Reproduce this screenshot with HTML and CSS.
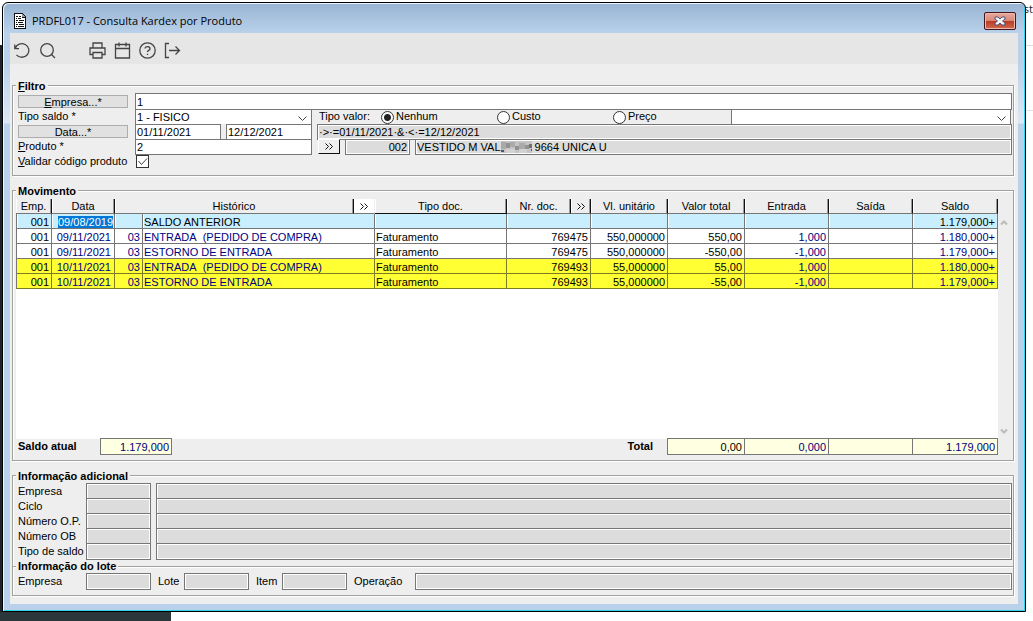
FILE: index.html
```html
<!DOCTYPE html>
<html lang="pt-BR">
<head>
<meta charset="utf-8">
<title>PRDFL017 - Consulta Kardex por Produto</title>
<link rel="stylesheet" href="styles.css">
</head>
<body>
<div class="behind" aria-hidden="true">st</div>
<main class="window">
  <header class="titlebar">
    <svg class="app-icon" width="12" height="16" viewBox="0 0 12 16" shape-rendering="crispEdges"><path d="M0 0h8l4 4v12H0z" fill="#111"/><path d="M1 1h7v4h3v10H1z" fill="#fff"/><path d="M8 1l3 3H8z" fill="#999"/><path d="M2 3h2v1H2zM5 3h2v1H5zM2 5h1v1H2zM4 5h3v1H4zM2 7h2v1H2zM5 7h5v1H5zM2 9h1v1H2zM4 9h5v1H4zM2 11h2v1H2zM5 11h5v1H5zM2 13h1v1H2zM4 13h6v1H4z" fill="#111"/></svg>
    <h1 class="title">PRDFL017 - Consulta Kardex por Produto</h1>
    <button class="close" type="button" aria-label="Fechar"><svg width="12" height="10" viewBox="0 0 12 10"><path d="M1 1h3l2 2 2-2h3v2L8.500 5 11 7v2H8L6 7 4 9H1V7l2.500-2L1 3z" fill="#f4f4f8" stroke="#4d5470" stroke-width="1"/></svg></button>
  </header>
  <nav class="toolbar" aria-label="Ferramentas">
    <button type="button" class="tool" aria-label="Desfazer"><svg viewBox="0 0 17 17"><path d="M.8 2.500v4.200h4.200M1.200 6.500A7 6.800 0 1 1 2.500 12.800"/></svg></button>
    <button type="button" class="tool" aria-label="Pesquisar"><svg viewBox="0 0 17 17"><circle cx="8" cy="8" r="6.300"/><path d="M12.500 12.500l3.500 3.500"/></svg></button>
    <button type="button" class="tool tool-gap" aria-label="Imprimir"><svg viewBox="0 0 17 17"><path d="M4 6V1h9v5M4 12.500H1V6h15v6.500h-3M4 10.500h9V16H4z"/></svg></button>
    <button type="button" class="tool" aria-label="Calendário"><svg viewBox="0 0 17 17"><path d="M1.500 2.500h14v13.500h-14zM1.500 6.500h14M5 .5v4M12 .5v4"/></svg></button>
    <button type="button" class="tool" aria-label="Ajuda"><svg viewBox="0 0 17 17"><circle cx="8.500" cy="8.500" r="7.700"/><path d="M6 6.500c.3-2.700 5-2.500 5 .2 0 1.700-2.500 1.700-2.500 3.300M8.500 11.800v1.300"/></svg></button>
    <button type="button" class="tool" aria-label="Sair"><svg viewBox="0 0 17 17"><path d="M5 1.500H1.500v14H5M5 8.500h10.500M11.500 4.500l4 4-4 4"/></svg></button>
  </nav>

  <form class="content">
    <fieldset class="group">
      <legend><u>F</u>iltro</legend>
      <div class="row">
        <div class="label"><button type="button" class="label-btn" id="l-emp"><u>E</u>mpresa...*</button></div>
        <input class="field tall grow" type="text" value="1" aria-labelledby="l-emp">
      </div>
      <div class="row">
        <label class="label" for="tipo">Tipo saldo *</label>
        <span class="combo w-main"><select id="tipo"><option>1 - FISICO</option></select><svg class="chev" viewBox="0 0 9 6"><path d="M.5 .5l4 4 4-4"/></svg></span>
        <span class="caption">Tipo valor:</span>
        <label class="radio"><input type="radio" name="valor" checked>Nenhum</label>
        <label class="radio"><input type="radio" name="valor">Custo</label>
        <label class="radio"><input type="radio" name="valor">Preço</label>
        <span class="combo grow price"><select aria-label="Tabela de preço"><option></option></select><svg class="chev" viewBox="0 0 9 6"><path d="M.5 .5l4 4 4-4"/></svg></span>
      </div>
      <div class="row">
        <div class="label"><button type="button" class="label-btn" id="l-data">Data...*</button></div>
        <span class="dates w-main"><input class="field date" type="text" value="01/11/2021" aria-labelledby="l-data"><input class="field date" type="text" value="12/12/2021" aria-label="Data final"></span>
        <input class="field ro grow gap" type="text" readonly value="·&gt;·=01/11/2021·&amp;·&lt;·=12/12/2021" aria-label="Expressão">
      </div>
      <div class="row">
        <label class="label" for="prod"><u>P</u>roduto *</label>
        <input class="field w-main" id="prod" type="text" value="2">
        <button type="button" class="more" aria-label="Mais produtos"><svg viewBox="0 0 8 7"><path d="M.5 .5l3 3-3 3M4.500 .5l3 3-3 3"/></svg></button>
        <input class="field ro code" type="text" readonly value="002" aria-label="Código">
        <output class="field ro desc grow gap"><span>VESTIDO M VAL</span><svg class="mosaic" viewBox="0 0 34 13" preserveAspectRatio="none" shape-rendering="crispEdges"><path d="M0 0h34v13H0z" fill="#c4c4c4"/><path d="M0 1h5v8H0zM10 1h5v5h-5zM20 2h6v7h-6z" fill="#aaa"/><path d="M5 2h5v6H5zM15 5h5v5h-5zM26 4h5v5h-5z" fill="#929292"/><path d="M31 3h3v5h-3z" fill="#707070"/><path d="M0 10h3v2H0zM33 9h1v2h-1z" fill="#555"/><path d="M5 9h10v4H5zM20 9h8v4h-8z" fill="#d2d2d2"/></svg><span>9664 UNICA U</span></output>
      </div>
      <div class="row">
        <label class="label" for="valida"><u>V</u>alidar código produto</label>
        <span class="check"><input type="checkbox" id="valida" checked><svg viewBox="0 0 13 13"><path d="M2.500 6l3 3.500 5.500-6"/></svg></span>
      </div>
    </fieldset>

    <fieldset class="group movement">
      <legend>Movimento</legend>
      <div class="grid-wrap">
        <div class="grid-area">
          <table class="kardex">
            <colgroup><col class="c36"><col class="c63"><col class="c28"><col><col class="c21"><col class="c132"><col class="c64"><col class="c20"><col class="c77"><col class="c77"><col class="c84"><col class="c84"><col class="c85"></colgroup>
            <thead><tr><th>Emp.</th><th>Data</th><th colspan="2">Histórico</th><th class="white"><button type="button" class="th-more" aria-label="Mais histórico"><svg viewBox="0 0 8 7"><path d="M.5 .5l3 3-3 3M4.500 .5l3 3-3 3"/></svg></button></th><th class="doc">Tipo doc.</th><th>Nr. doc.</th><th><button type="button" class="th-more" aria-label="Mais documentos"><svg viewBox="0 0 8 7"><path d="M.5 .5l3 3-3 3M4.500 .5l3 3-3 3"/></svg></button></th><th>Vl. unitário</th><th>Valor total</th><th>Entrada</th><th>Saída</th><th>Saldo</th></tr></thead>
            <tbody>
              <tr class="current"><td>001</td><td><mark>09/08/2019</mark></td><td></td><td class="txt" colspan="2">SALDO ANTERIOR</td><td class="txt"></td><td colspan="2"></td><td></td><td></td><td></td><td></td><td>1.179,000+</td></tr>
              <tr><td>001</td><td class="navy date-cell">09/11/2021</td><td class="navy">03</td><td class="txt navy" colspan="2">ENTRADA&nbsp; (PEDIDO DE COMPRA)</td><td class="txt">Faturamento</td><td colspan="2">769475</td><td>550,000000</td><td>550,00</td><td class="navy">1,000</td><td></td><td class="navy">1.180,000+</td></tr>
              <tr><td>001</td><td class="navy date-cell">09/11/2021</td><td class="navy">03</td><td class="txt navy" colspan="2">ESTORNO DE ENTRADA</td><td class="txt">Faturamento</td><td colspan="2">769475</td><td>550,000000</td><td>-550,00</td><td class="navy">-1,000</td><td></td><td class="navy">1.179,000+</td></tr>
              <tr class="yellow"><td>001</td><td class="navy date-cell">10/11/2021</td><td class="navy">03</td><td class="txt navy" colspan="2">ENTRADA&nbsp; (PEDIDO DE COMPRA)</td><td class="txt">Faturamento</td><td colspan="2">769493</td><td>55,000000</td><td>55,00</td><td class="navy">1,000</td><td></td><td class="navy">1.180,000+</td></tr>
              <tr class="yellow"><td>001</td><td class="navy date-cell">10/11/2021</td><td class="navy">03</td><td class="txt navy" colspan="2">ESTORNO DE ENTRADA</td><td class="txt">Faturamento</td><td colspan="2">769493</td><td>55,000000</td><td>-55,00</td><td class="navy">-1,000</td><td></td><td class="navy">1.179,000+</td></tr>
            </tbody>
          </table>
        </div>
        <div class="scroll"><svg viewBox="0 0 8 6"><path d="M1 4.500l3-3 3 3"/></svg><svg viewBox="0 0 8 6"><path d="M1 1.500l3 3 3-3"/></svg></div>
      </div>
      <div class="totals">
        <label class="bold saldo-label" for="saldo">Saldo atual</label>
        <input id="saldo" class="sum saldo navy" readonly value="1.179,000">
        <span class="bold total-label" id="l-total">Total</span>
        <input class="sum s78" readonly value="0,00" aria-labelledby="l-total">
        <input class="sum s85 navy" readonly value="0,000" aria-label="Total entrada">
        <input class="sum s85" readonly value="" aria-label="Total saída">
        <input class="sum s86 navy" readonly value="1.179,000" aria-label="Total saldo">
      </div>
    </fieldset>

    <fieldset class="group extra">
      <legend>Informação adicional</legend>
      <div class="row"><label class="info-label" for="i1">Empresa</label><input id="i1" class="field ro tall short" readonly><input class="field ro tall grow gap" readonly aria-label="Nome da empresa"></div>
      <div class="row"><label class="info-label" for="i2">Ciclo</label><input id="i2" class="field ro tall short" readonly><input class="field ro tall grow gap" readonly aria-label="Descrição do ciclo"></div>
      <div class="row"><label class="info-label" for="i3">Número O.P.</label><input id="i3" class="field ro tall short" readonly><input class="field ro tall grow gap" readonly aria-label="Descrição da O.P."></div>
      <div class="row"><label class="info-label" for="i4">Número OB</label><input id="i4" class="field ro tall short" readonly><input class="field ro tall grow gap" readonly aria-label="Descrição da OB"></div>
      <div class="row"><label class="info-label" for="i5">Tipo de saldo</label><input id="i5" class="field ro tall short" readonly><input class="field ro tall grow gap" readonly aria-label="Descrição do tipo"></div>
    </fieldset>

    <fieldset class="group lot">
      <legend>Informação do lote</legend>
      <div class="row">
        <label class="info-label" for="e">Empresa</label><input id="e" class="field ro tall short" readonly>
        <label class="lot-label w33" for="lo">Lote</label><input id="lo" class="field ro tall short" readonly>
        <label class="lot-label w33" for="it">Item</label><input id="it" class="field ro tall short" readonly>
        <label class="lot-label w68" for="op">Operação</label><input id="op" class="field ro tall grow" readonly>
      </div>
    </fieldset>
  </form>
</main>
</body>
</html>
```
FILE: styles.css
```css
* { box-sizing: border-box; }

body {
  margin: 0;
  min-height: 100vh;
  display: flex;
  padding: 2px 7px 9px 2px;
  font: 11px/15px "Liberation Sans", Arial, sans-serif;
  color: #000;
  background:
    linear-gradient(#2b363a, #2b363a) 0 100% / 171px 9px no-repeat,
    linear-gradient(#1c252b, #1c252b) 0 45px / 3px 100% no-repeat,
    linear-gradient(#dcdcdc, #dcdcdc) 100% 45px / 8px 1px no-repeat,
    linear-gradient(#e4e4e4, #e4e4e4) 100% 110px / 8px 1px no-repeat,
    #fff;
}

.behind {
  position: absolute;
  top: 0;
  right: 0;
  font: 11px/17px "Open Sans", sans-serif;
  color: #222;
}

.window {
  position: relative;
  flex: 1;
  min-width: 0;
  display: flex;
  flex-direction: column;
  padding: 1px 7px 7px;
  border: 1px solid #000;
  border-radius: 6px 6px 0 0;
  box-shadow: inset 1px 1px 0 #eef6fb, inset -1px -1px 0 #2fd3ea;
  background: linear-gradient(#98b4d2 0, #b9d1ea 30px, #b9d1ea 60px, #dce8f5 120px, #b9d1ea 121px);
}

.titlebar {
  display: flex;
  align-items: center;
  height: 29px;
  padding: 4px 2px 0 4px;
}

.title {
  flex: 1;
  margin: 0 0 0 6px;
  font: 11px/15px "Open Sans", "Noto Sans", sans-serif;
}

.app-icon { display: block; }

.close {
  display: flex;
  align-items: center;
  justify-content: center;
  width: 32px;
  height: 18px;
  padding: 0;
  border: 1px solid #431422;
  border-radius: 2px;
  box-shadow: inset 0 0 0 1px #f0b8a8;
  background: linear-gradient(#e9a99d, #d98677 50%, #b93a22 51%, #cf6a50);
}

.toolbar {
  display: flex;
  align-items: center;
  gap: 8px;
  height: 31px;
  padding: 3px 4px 0;
  background: #e6e6e6;
}

.tool {
  width: 17px;
  height: 17px;
  padding: 0;
  border: 0;
  background: none;
}

.tool svg, .more svg, .th-more svg, .check svg, .scroll svg, .chev {
  display: block;
  fill: none;
  stroke: #444;
}

.tool svg { stroke-width: 1.3; }
.tool-gap { margin-left: 25px; }

.content {
  flex: 1;
  display: flex;
  flex-direction: column;
  padding: 15px 4px 8px 2px;
  background: #eee;
}

.group {
  min-width: 0;
  margin: 0 0 8px;
  padding: 2px 1px 6px 5px;
  border: 1px solid #a0a0a0;
  box-shadow: 1px 1px 0 #fff, inset 1px 1px 0 #fff;
}

legend {
  height: 13px;
  margin-left: -2px;
  padding: 0 2px;
  font-weight: bold;
  background: #eee;
}

.row {
  display: flex;
  height: 15px;
}

.label {
  flex: none;
  width: 117px;
  white-space: nowrap;
}

.label-btn {
  display: block;
  width: 110px;
  height: 13px;
  margin-top: 1px;
  padding: 0;
  border: 1px solid #adadad;
  background: #e1e1e1;
  font: inherit;
  line-height: 13px;
}

.field, .combo {
  height: 16px;
  min-width: 0;
  border: 1px solid #767676;
  border-radius: 0;
  background: #fff;
}

.field {
  margin: 0;
  padding: 0 1px;
  font: inherit;
  color: inherit;
  outline: 0;
}

.tall { height: 17px; margin-top: -1px; }

.ro {
  background: #dcdcdc;
  box-shadow: inset 0 0 0 1px #fff;
}

.grow { flex: 1; }
.gap { margin-left: 5px; }
.w-main { flex: none; width: 177px; }

.combo {
  position: relative;
  height: 15px;
  border-width: 1px 1px 0 1px;
}

.price { margin: 0 1px 0 2px; }

.combo select {
  appearance: none;
  display: block;
  width: 100%;
  height: 14px;
  padding: 0 1px;
  border: 0;
  border-radius: 0;
  background: none;
  font: inherit;
  line-height: 14px;
  color: inherit;
}

.chev {
  position: absolute;
  right: 4px;
  top: 6px;
  width: 9px;
  height: 6px;
  pointer-events: none;
}

.caption {
  flex: none;
  width: 62px;
  margin-left: 7px;
}

.radio {
  flex: none;
  display: flex;
  align-items: center;
  width: 116px;
}

.radio input {
  appearance: none;
  width: 13px;
  height: 13px;
  margin: 1px 2px 0 0;
  border: 1px solid #333;
  border-radius: 50%;
  background: #fff;
}

.radio input:checked {
  background: radial-gradient(circle, #222 3px, #fff 4px);
}

.dates {
  display: flex;
  justify-content: space-between;
}

.date { width: 86px; }

.more {
  flex: none;
  display: flex;
  align-items: center;
  justify-content: center;
  width: 22px;
  height: 15px;
  margin: 0 5px 0 6px;
  padding: 0;
  border: 1px solid;
  border-color: #fff #111 #111 #fff;
  background: #eee;
}

.more svg, .th-more svg {
  width: 8px;
  height: 7px;
  stroke: #111;
}

.code {
  width: 65px;
  padding-right: 2px;
  text-align: right;
}

.desc {
  display: flex;
  align-items: center;
  padding-left: 1px;
  white-space: nowrap;
  overflow: hidden;
}

.mosaic {
  width: 31px;
  height: 12px;
  margin-right: 3px;
}

.check {
  position: relative;
  width: 13px;
  height: 13px;
  margin: 1px;
}

.check input {
  appearance: none;
  display: block;
  width: 13px;
  height: 13px;
  margin: 0;
  border: 1px solid #333;
  background: #fff;
}

.check svg {
  position: absolute;
  inset: 0;
  pointer-events: none;
}

.movement {
  flex: 1;
  display: flex;
  flex-direction: column;
  padding-bottom: 5px;
}

.grid-wrap {
  flex: 1;
  display: flex;
  margin-left: -2px;
}

.grid-area {
  flex: 1;
  background: #fff;
}

.kardex {
  width: 100%;
  table-layout: fixed;
  border-collapse: separate;
  border-spacing: 0;
}

.c36 { width: 36px; }
.c63 { width: 63px; }
.c28 { width: 28px; }
.c21 { width: 21px; }
.c132 { width: 132px; }
.c64 { width: 64px; }
.c20 { width: 20px; }
.c77 { width: 77px; }
.c84 { width: 84px; }
.c85 { width: 85px; }

.kardex th {
  height: 15px;
  padding: 0;
  font-weight: normal;
  line-height: 14px;
  background: #eee;
  border-right: 1px solid #111;
  border-bottom: 1px solid #767676;
  box-shadow: inset 1px 0 0 #fff, inset -1px 0 0 #999;
}

.kardex th.white {
  background: #fff;
  border-right-color: #eee;
  box-shadow: none;
}

.kardex th.doc { border-bottom-color: #111; }

.th-more {
  display: flex;
  align-items: center;
  justify-content: center;
  width: 100%;
  height: 14px;
  padding: 0;
  border: 0;
  background: none;
}

.kardex td {
  height: 15px;
  padding: 2px 2px 0 1px;
  text-align: right;
  line-height: 12px;
  white-space: nowrap;
  border-right: 1px solid #767676;
  border-bottom: 1px solid #767676;
}

.kardex td:first-child { border-left: 1px solid #767676; }
.kardex td.txt { text-align: left; }
.kardex td.date-cell { padding-right: 3px; }

.current td {
  background: #c9eefe;
  box-shadow: inset 1px 0 0 #fff;
}

.yellow td {
  background: #ff3;
  border-color: #7c7c22;
}

.kardex mark {
  display: block;
  width: 55px;
  height: 12px;
  margin: 0 -1px 0 auto;
  color: #fff;
  background: #0078d7;
}

.navy { color: #000080; }

.scroll {
  flex: none;
  width: 14px;
  padding: 21px 0 5px 2px;
  display: flex;
  flex-direction: column;
  justify-content: space-between;
}

.scroll svg {
  width: 8px;
  height: 6px;
  stroke: #bbb;
  stroke-width: 2;
}

.totals {
  display: flex;
  height: 17px;
  margin: -1px 14px 0 0;
}

.bold { font-weight: bold; }
.saldo-label { width: 82px; line-height: 17px; }

.sum {
  height: 17px;
  margin: 0 0 0 -1px;
  padding: 0 2px;
  border: 1px solid #767676;
  border-radius: 0;
  background: #ffffe1;
  font: inherit;
  text-align: right;
}

.saldo { width: 72px; margin: 0; }
.total-label { margin: 0 15px 0 auto; line-height: 17px; }
.s78 { width: 78px; }
.s85 { width: 85px; }
.s86 { width: 86px; }

.extra {
  margin: 0;
  padding-bottom: 7px;
  border-bottom: 0;
}

.lot {
  margin: -7px 0 0;
  padding-top: 0;
}

.lot legend {
  height: 15px;
  background: linear-gradient(transparent 2px, #eee 2px);
}

.info-label {
  flex: none;
  width: 68px;
  line-height: 15px;
  white-space: nowrap;
}

.short { flex: none; width: 65px; }
.lot-label { flex: none; padding-left: 7px; line-height: 15px; }
.w33 { width: 33px; }
.w68 { width: 68px; }
```
